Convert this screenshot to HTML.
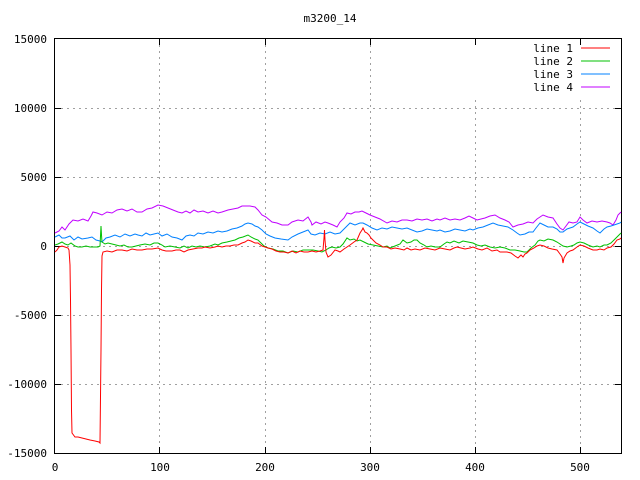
<!DOCTYPE html>
<html><head><meta charset="utf-8"><style>
html,body{margin:0;padding:0;background:#fff;}
svg{display:block;font-family:"DejaVu Sans Mono","Liberation Mono",monospace;font-size:11px;}
</style></head><body>
<svg width="640" height="480" viewBox="0 0 640 480" xmlns="http://www.w3.org/2000/svg">
<rect width="640" height="480" fill="#fff"/>
<g stroke="#a0a0a0" stroke-width="1" stroke-dasharray="2,4" fill="none">
<line x1="55" y1="108.5" x2="621" y2="108.5"/>
<line x1="55" y1="177.5" x2="621" y2="177.5"/>
<line x1="55" y1="246.5" x2="621" y2="246.5"/>
<line x1="55" y1="315.5" x2="621" y2="315.5"/>
<line x1="55" y1="384.5" x2="621" y2="384.5"/>
<line x1="159.5" y1="39" x2="159.5" y2="453"/>
<line x1="265.5" y1="39" x2="265.5" y2="453"/>
<line x1="370.5" y1="39" x2="370.5" y2="453"/>
<line x1="475.5" y1="100" x2="475.5" y2="453"/>
<line x1="580.5" y1="100" x2="580.5" y2="453"/>
</g>
<g stroke="#000" stroke-width="1" fill="none">
<rect x="54.5" y="38.5" width="567" height="415"/>
<path d="M55 108.5h6M615 108.5h6M55 177.5h6M615 177.5h6M55 246.5h6M615 246.5h6M55 315.5h6M615 315.5h6M55 384.5h6M615 384.5h6"/>
<path d="M159.5 453v-6M159.5 39v6M265.5 453v-6M265.5 39v6M370.5 453v-6M370.5 39v6M475.5 453v-6M475.5 39v6M580.5 453v-6M580.5 39v6"/>
</g>
<g fill="#000" text-anchor="end">
<text x="47" y="43">15000</text>
<text x="47" y="112">10000</text>
<text x="47" y="181">5000</text>
<text x="47" y="250">0</text>
<text x="47" y="319">-5000</text>
<text x="47" y="388">-10000</text>
<text x="47" y="457">-15000</text>
</g>
<g fill="#000" text-anchor="middle">
<text x="55" y="471">0</text>
<text x="160" y="471">100</text>
<text x="265" y="471">200</text>
<text x="370" y="471">300</text>
<text x="475" y="471">400</text>
<text x="580" y="471">500</text>
<text x="330" y="22">m3200_14</text>
</g>
<g fill="#000" text-anchor="end">
<text x="573" y="52">line 1</text>
<text x="573" y="65">line 2</text>
<text x="573" y="78">line 3</text>
<text x="573" y="91">line 4</text>
</g>
<g stroke-width="1" fill="none">
<line x1="581" y1="48" x2="610" y2="48" stroke="#ff0000"/>
<line x1="581" y1="61" x2="610" y2="61" stroke="#00c000"/>
<line x1="581" y1="74" x2="610" y2="74" stroke="#0080ff"/>
<line x1="581" y1="87" x2="610" y2="87" stroke="#c000ff"/>
<polyline stroke="#c000ff" points="55,233 59,231 62,227 65,230 69,224 73,220 78,221 83,219 88,221 91,216 93,212 97,213 102,215 107,212 112,213 117,210 122,209 127,211 132,209 137,212 142,212 147,209 152,208 158,205 163,206 168,208 173,210 178,212 182,213 186,211 190,213 194,210 198,212 203,211 208,213 213,211 218,213 222,212 228,210 233,209 238,208 242,206 245,206 250,206 255,207 258,210 262,215 266,217 272,222 277,223 282,225 288,225 292,222 298,220 303,221 308,217 311,222 312,225 316,222 321,224 325,222 328,223 333,225 337,227 340,222 344,218 347,213 351,214 355,212 359,212 362,211 366,213 370,215 375,217 380,219 387,223 392,221 397,222 402,220 407,220 412,221 417,219 422,220 427,219 432,221 437,219 440,220 445,218 450,220 455,219 460,220 465,218 469,216 473,218 477,220 481,219 485,218 490,216 495,215 500,218 505,220 509,222 513,227 518,225 523,224 528,222 533,223 537,219 540,217 543,215 548,217 553,218 557,224 560,228 563,230 566,226 569,222 573,223 577,222 580,217 583,220 587,223 592,221 597,222 602,221 607,222 610,223 613,225 616,220 618,215 621,212"/>
<polyline stroke="#0080ff" points="55,237 59,235 62,238 65,238 70,236 74,240 78,237 82,239 88,238 92,237 96,240 100,241 102,242 106,238 110,237 115,235 120,237 125,234 130,236 135,234 138,235 142,236 146,233 150,235 154,234 158,233 162,236 167,234 172,237 177,238 182,240 186,236 190,235 194,236 198,233 203,234 208,232 213,233 218,231 222,232 227,231 232,229 237,228 242,226 245,224 248,223 252,224 255,226 258,227 262,230 266,234 270,236 275,238 281,239 288,240 292,237 298,234 303,232 308,230 311,234 315,235 320,233 325,234 330,232 335,234 340,233 345,228 350,223 355,225 360,223 363,223 367,225 372,228 377,230 382,228 387,229 392,227 397,228 402,229 407,228 412,230 417,232 422,231 427,229 432,230 437,231 440,230 445,232 450,231 455,229 460,230 465,231 470,229 473,230 478,228 483,227 488,225 493,223 498,225 503,226 508,227 513,230 517,233 520,235 525,234 529,232 533,232 536,228 540,223 544,225 548,227 553,227 557,229 560,232 563,232 567,229 570,228 573,227 577,224 580,222 584,224 588,226 593,228 597,231 600,233 604,229 607,227 611,226 614,225 617,224 620,223 621,222"/>
<polyline stroke="#00c000" points="55,245 58,244 62,242 65,244 68,245 71,243 75,246 78,247 82,247 86,246 90,247 94,247 98,247 100,246 101,226 101.5,235 102,242 105,244 108,243 112,244 116,245 120,246 124,245 128,247 132,247 136,246 140,245 145,244 150,245 154,243 158,243 162,245 165,247 170,246 175,247 180,248 184,246 188,248 192,246 196,247 200,246 205,247 210,246 215,244 218,245 222,243 227,242 231,241 235,240 239,238 243,237 248,235 251,237 255,239 258,240 261,243 264,246 268,248 273,249 278,251 283,251 288,253 293,251 298,252 303,250 308,250 313,250 318,251 322,252 326,250 329,248 332,247 336,248 340,247 343,244 347,238 350,240 354,239 357,241 360,240 364,242 368,244 373,245 378,246 383,247 387,246 390,248 395,246 400,244 403,240 407,243 411,242 414,240 417,240 420,243 424,245 427,247 431,246 435,247 440,247 444,244 447,242 450,243 454,241 459,243 463,241 468,242 473,243 477,245 481,246 485,245 490,247 495,248 500,247 505,248 510,250 515,250 520,251 524,252 527,252 531,248 535,245 538,241 540,240 544,241 548,239 553,240 557,242 560,244 563,246 567,247 571,246 574,245 577,243 580,242 584,243 588,245 593,247 597,246 600,247 604,245 607,245 611,243 614,240 617,237 620,234 621,233"/>
<polyline stroke="#ff0000" points="55,252 57,250 59,247 62,246 65,247 68,248 69,250 70,265 70.5,300 71,350 71.5,410 72,433 75,437 78,437 82,438 86,439 90,440 95,441 99,442 100,443 101,350 101.5,290 102,256 103,252 107,251 112,252 117,250 122,250 127,251 132,249 137,250 142,250 147,249 152,249 158,248 162,250 166,251 172,251 176,250 180,250 184,252 188,250 193,249 198,248 202,248 205,247 210,248 215,247 218,246 222,247 226,246 230,246 234,245 238,245 242,243 245,242 248,240 251,241 255,243 258,243 262,246 265,247 268,248 272,249 276,251 280,252 284,252 288,253 292,251 296,253 300,251 304,252 308,252 312,251 316,252 320,251 323,250 324,238 324.5,230 325,240 326,252 328,257 331,255 335,250 338,251 340,252 344,249 347,247 350,245 354,242 357,240 360,233 362,230 363,228 365,232 367,233 369,235 371,238 373,240 376,243 380,245 383,247 387,247 391,249 395,248 400,249 404,250 407,248 411,250 415,249 420,250 425,248 430,249 435,250 440,248 445,249 450,250 454,248 457,247 461,248 465,249 470,248 473,247 478,249 482,250 487,248 492,251 497,250 500,252 504,252 507,252 511,253 515,256 518,258 521,255 523,257 525,254 527,253 530,250 534,248 537,246 540,245 544,246 548,248 552,249 557,250 560,254 562,257 563,263 564,258 567,253 570,251 573,250 577,247 580,245 584,246 588,248 593,250 597,250 600,249 604,250 607,248 611,247 614,244 617,240 620,239 621,238"/>
</g>
</svg>
</body></html>
